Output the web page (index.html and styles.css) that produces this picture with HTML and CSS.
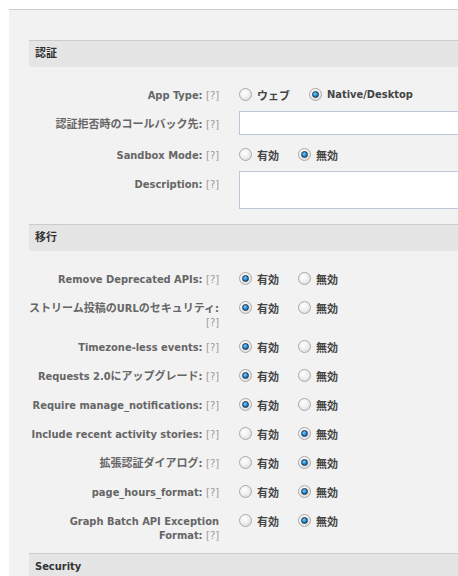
FILE: index.html
```html
<!DOCTYPE html>
<html lang="ja">
<head>
  <meta charset="UTF-8" />
  <title>アプリ設定</title>
  <link rel="stylesheet" href="styles.css">
</head>
<body>
  <div class="page">
    <div class="panel">

      <h3 class="section-head">認証</h3>
      <div class="fields">
        <div class="row">
          <div class="label">App Type: <span class="help">[?]</span></div>
          <div class="control">
            <label class="opt"><span class="radio"></span>ウェブ</label>
            <label class="opt"><span class="radio on"></span>Native/Desktop</label>
          </div>
        </div>
        <div class="row">
          <div class="label">認証拒否時のコールバック先: <span class="help">[?]</span></div>
          <div class="control"><input class="text-input" type="text"></div>
        </div>
        <div class="row">
          <div class="label">Sandbox Mode: <span class="help">[?]</span></div>
          <div class="control">
            <label class="opt"><span class="radio"></span>有効</label>
            <label class="opt"><span class="radio on"></span>無効</label>
          </div>
        </div>
        <div class="row">
          <div class="label">Description: <span class="help">[?]</span></div>
          <div class="control"><textarea class="text-area"></textarea></div>
        </div>
      </div>

      <h3 class="section-head">移行</h3>
      <div class="fields">
        <div class="row">
          <div class="label">Remove Deprecated APIs: <span class="help">[?]</span></div>
          <div class="control">
            <label class="opt"><span class="radio on"></span>有効</label>
            <label class="opt"><span class="radio"></span>無効</label>
          </div>
        </div>
        <div class="row">
          <div class="label">ストリーム投稿のURLのセキュリティ: <span class="help">[?]</span></div>
          <div class="control">
            <label class="opt"><span class="radio on"></span>有効</label>
            <label class="opt"><span class="radio"></span>無効</label>
          </div>
        </div>
        <div class="row">
          <div class="label">Timezone-less events: <span class="help">[?]</span></div>
          <div class="control">
            <label class="opt"><span class="radio on"></span>有効</label>
            <label class="opt"><span class="radio"></span>無効</label>
          </div>
        </div>
        <div class="row">
          <div class="label">Requests 2.0にアップグレード: <span class="help">[?]</span></div>
          <div class="control">
            <label class="opt"><span class="radio on"></span>有効</label>
            <label class="opt"><span class="radio"></span>無効</label>
          </div>
        </div>
        <div class="row">
          <div class="label">Require manage_notifications: <span class="help">[?]</span></div>
          <div class="control">
            <label class="opt"><span class="radio on"></span>有効</label>
            <label class="opt"><span class="radio"></span>無効</label>
          </div>
        </div>
        <div class="row">
          <div class="label">Include recent activity stories: <span class="help">[?]</span></div>
          <div class="control">
            <label class="opt"><span class="radio"></span>有効</label>
            <label class="opt"><span class="radio on"></span>無効</label>
          </div>
        </div>
        <div class="row">
          <div class="label">拡張認証ダイアログ: <span class="help">[?]</span></div>
          <div class="control">
            <label class="opt"><span class="radio"></span>有効</label>
            <label class="opt"><span class="radio on"></span>無効</label>
          </div>
        </div>
        <div class="row">
          <div class="label">page_hours_format: <span class="help">[?]</span></div>
          <div class="control">
            <label class="opt"><span class="radio"></span>有効</label>
            <label class="opt"><span class="radio on"></span>無効</label>
          </div>
        </div>
        <div class="row">
          <div class="label">Graph Batch API Exception Format: <span class="help">[?]</span></div>
          <div class="control">
            <label class="opt"><span class="radio"></span>有効</label>
            <label class="opt"><span class="radio on"></span>無効</label>
          </div>
        </div>
      </div>

      <h3 class="section-head">Security</h3>
      <div class="fields"></div>

    </div>
  </div>
</body>
</html>
```

FILE: styles.css
```css
html, body {
  margin: 0;
  overflow: hidden;
}
body {
  background: #fff;
  font-family: "DejaVu Sans Condensed", "DejaVu Sans", "Noto Sans CJK JP", sans-serif;
  font-size: 11px;
  color: #333;
}
.page {
  padding: 9px 0 0 9px;
}
.panel {
  width: 620px;
  min-height: 600px;
  background: #f2f2f2;
  border-top: 1px solid #cccccc;
  padding: 30px 0 0 20px;
}
.section-head {
  margin: 0;
  height: 26px;
  line-height: 26px;
  padding-left: 6px;
  background: #e5e5e5;
  border-top: 1px solid #cccccc;
  font-size: 11px;
  font-weight: bold;
  color: #333;
}
.fields {
  margin-left: -5px;
  padding: 14px 0 7px;
}
.row {
  display: grid;
  grid-template-columns: 195px 1fr;
  column-gap: 20px;
  padding: 1px 0 3px;
}
.label {
  text-align: right;
  font-weight: bold;
  color: #666;
  line-height: 14px;
  padding-top: 7px;
}
.help {
  font-weight: normal;
  color: #999;
}
.control {
  display: flex;
  align-items: center;
  align-self: start;
  min-height: 25px;
}
.opt {
  display: inline-flex;
  align-items: center;
  height: 25px;
  margin-right: 19px;
  font-weight: bold;
  color: #444;
}
.radio {
  position: relative;
  width: 11px;
  height: 11px;
  margin-right: 5px;
  border: 1px solid #a9a9a9;
  border-radius: 50%;
  background: radial-gradient(circle at 40% 35%, #ffffff 0%, #f0f0f0 45%, #d2d2d2 100%);
}
.radio.on::after {
  content: "";
  position: absolute;
  left: 2px;
  top: 2px;
  width: 5px;
  height: 5px;
  border: 1px solid #1c3042;
  border-radius: 50%;
  background: radial-gradient(circle at 40% 35%, #7fd0ff 0%, #1f8ad6 50%, #0b4f8c 100%);
}
.text-input {
  box-sizing: border-box;
  width: 320px;
  height: 24px;
  margin: 0 0 3px;
  border: 1px solid #bdc7d8;
  background: #fff;
}
.text-area {
  box-sizing: border-box;
  width: 320px;
  height: 38px;
  margin: 0 0 5px;
  border: 1px solid #bdc7d8;
  background: #fff;
  resize: none;
}
```
